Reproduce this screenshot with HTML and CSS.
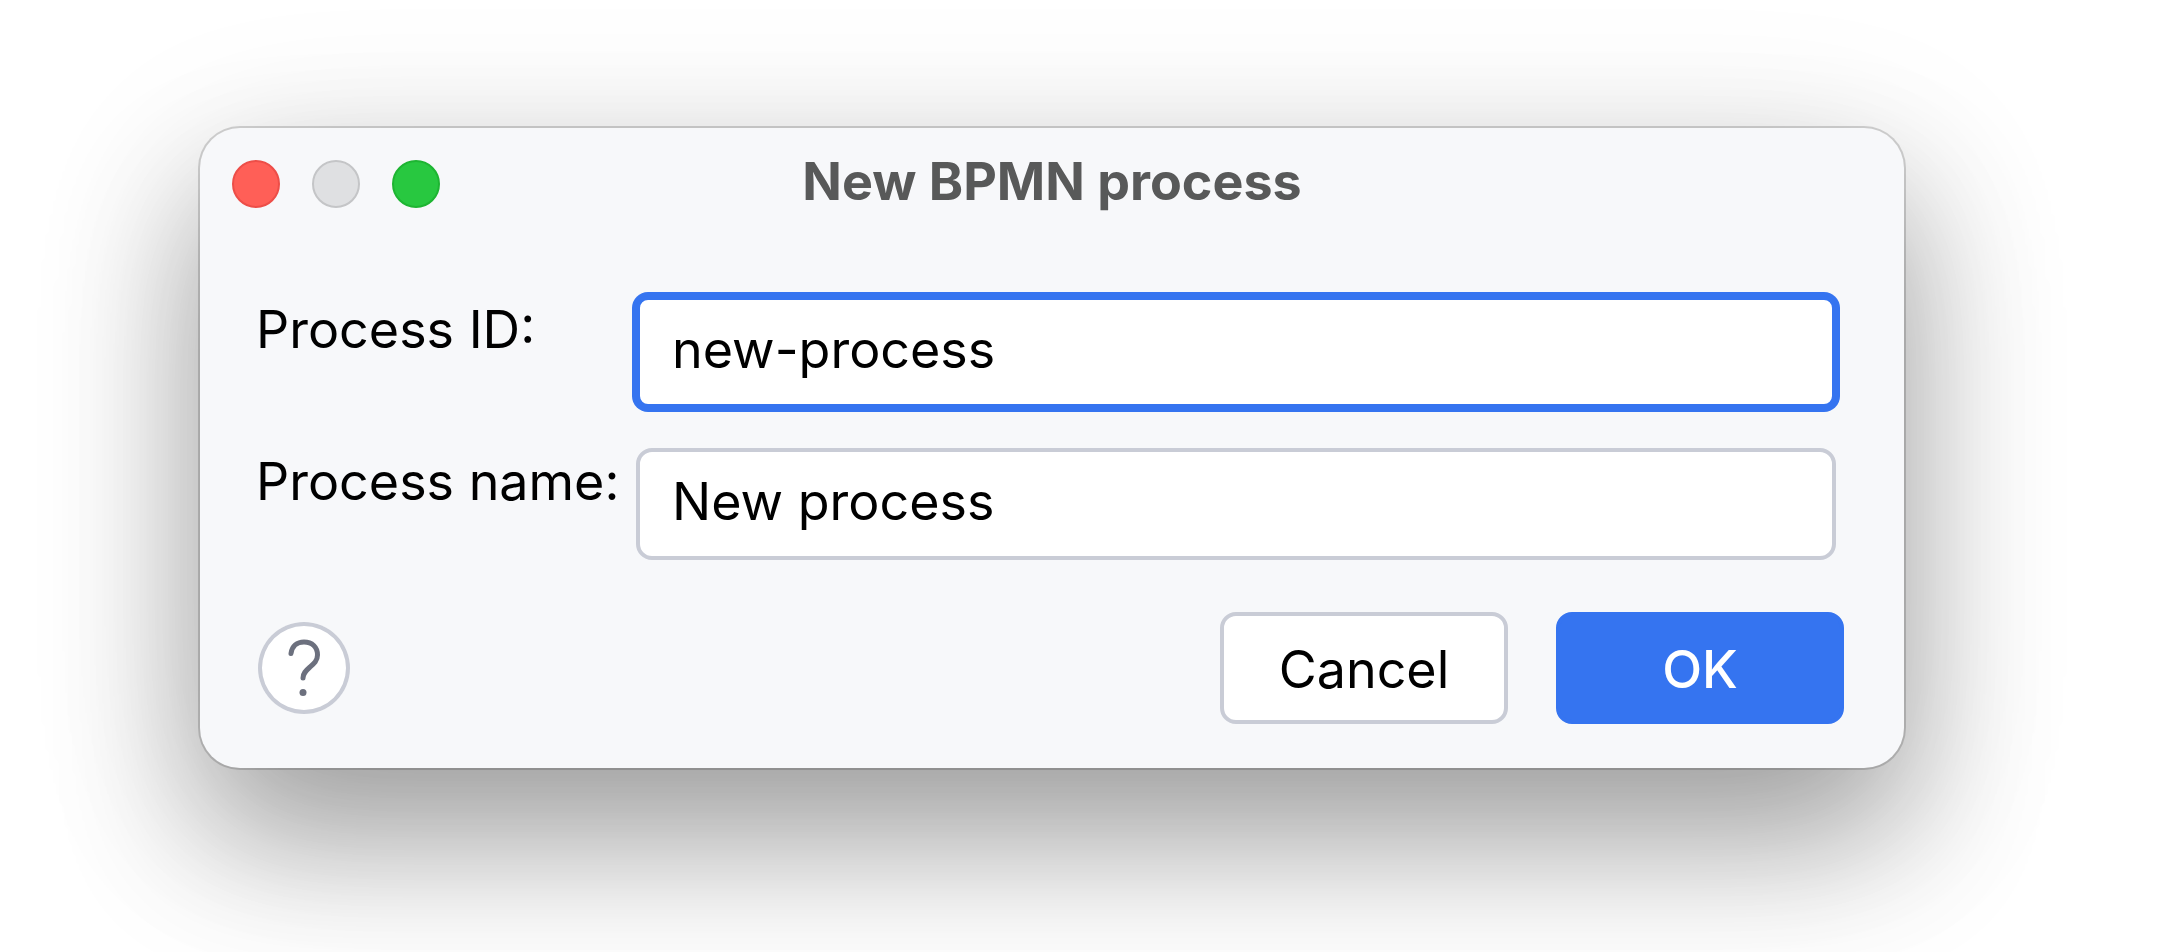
FILE: index.html
```
<!DOCTYPE html>
<html lang="en">
<head>
    <meta charset="UTF-8">
    <meta name="viewport" content="width=device-width, initial-scale=1.0">
    <title>New BPMN process</title>
    <link rel="stylesheet" href="styles.css">
</head>
<body>
    <form class="dialog" role="dialog" aria-labelledby="dialog-title">
        <header class="titlebar">
            <div class="lights">
                <button type="button" class="light close" aria-label="Close"></button>
                <button type="button" class="light minimize" aria-label="Minimize" disabled></button>
                <button type="button" class="light zoom" aria-label="Zoom"></button>
            </div>
            <h1 class="title" id="dialog-title">New BPMN process</h1>
        </header>

        <div class="fields">
            <label for="process-id">Process ID:</label>
            <input class="focused" type="text" id="process-id" value="new-process">
            <label for="process-name">Process name:</label>
            <input type="text" id="process-name" value="New process">
        </div>

        <footer class="footer">
            <button type="button" class="help" aria-label="Help">
                <svg viewBox="0 0 92 92" fill="none">
                    <path d="M33 31.500C34 24 39 20 46 20C54 20 59.500 25 59.500 33C59.500 38.500 56 41.500 52 45C47.500 49 45 51.500 45 56" stroke="#6c707e" stroke-width="5" stroke-linecap="round"/>
                    <circle cx="45" cy="70.500" r="3.500" fill="#6c707e"/>
                </svg>
            </button>
            <button type="button" class="btn">Cancel</button>
            <button type="submit" class="btn primary">OK</button>
        </footer>
    </form>
</body>
</html>
```
FILE: styles.css
```
body {
  margin: 0;
  min-height: 100vh;
  box-sizing: border-box;
  padding: 128px 272px 128px 200px;
  overflow: hidden;
  background: #fff;
  font-family: Inter, sans-serif;
  font-size: 52px;
  line-height: 64px;
  color: #000;
}

.dialog {
  padding-bottom: 44px;
  border-radius: 40px;
  background: #f7f8fa;
  box-shadow: 0 0 0 2px rgba(0, 0, 0, 0.16), 0 72px 140px rgba(0, 0, 0, 0.3), 0 44px 180px rgba(0, 0, 0, 0.14);
}

.titlebar {
  display: grid;
  grid-template-columns: 1fr auto 1fr;
  padding: 22px 32px 18px;
}

.lights {
  display: flex;
  gap: 32px;
  padding-top: 10px;
}

.light {
  width: 48px;
  height: 48px;
  padding: 0;
  border: 2px solid;
  border-radius: 50%;
}

.close {
  background: #ff5f57;
  border-color: #ed4e48;
}

.minimize {
  background: #dfe0e2;
  border-color: #c4c5c7;
}

.zoom {
  background: #28c840;
  border-color: #1eb532;
}

.title {
  margin: 0;
  font-size: 52px;
  font-weight: 700;
  color: #585959;
}

.fields {
  display: grid;
  grid-template-columns: 380px 1fr;
  align-items: start;
  row-gap: 40px;
  padding: 64px 68px 52px 56px;
}

.fields label {
  padding-top: 2px;
}

.fields input {
  width: 100%;
  height: 112px;
  box-sizing: border-box;
  padding: 0 32px 6px;
  border: 4px solid #c9ccd6;
  border-radius: 16px;
  outline: none;
  background: #fff;
  font: inherit;
  color: inherit;
}

.fields .focused {
  border-color: #3574f0;
  box-shadow: 0 0 0 4px #3574f0;
  border-radius: 12px;
}

.footer {
  display: flex;
  align-items: center;
  gap: 48px;
  padding: 0 60px 0 58px;
}

.help {
  width: 92px;
  height: 92px;
  margin-right: auto;
  padding: 0;
  border: 0;
  border-radius: 50%;
  background: #fff;
  box-shadow: inset 0 0 0 4px #c9ccd6;
}

.help svg {
  display: block;
}

.btn {
  width: 288px;
  height: 112px;
  padding: 4px 0 0;
  border: 4px solid #c9ccd6;
  border-radius: 16px;
  background: #fff;
  font: inherit;
  color: inherit;
}

.primary {
  border-color: #3574f0;
  background: #3574f0;
  font-weight: 500;
  color: #fff;
}
```
